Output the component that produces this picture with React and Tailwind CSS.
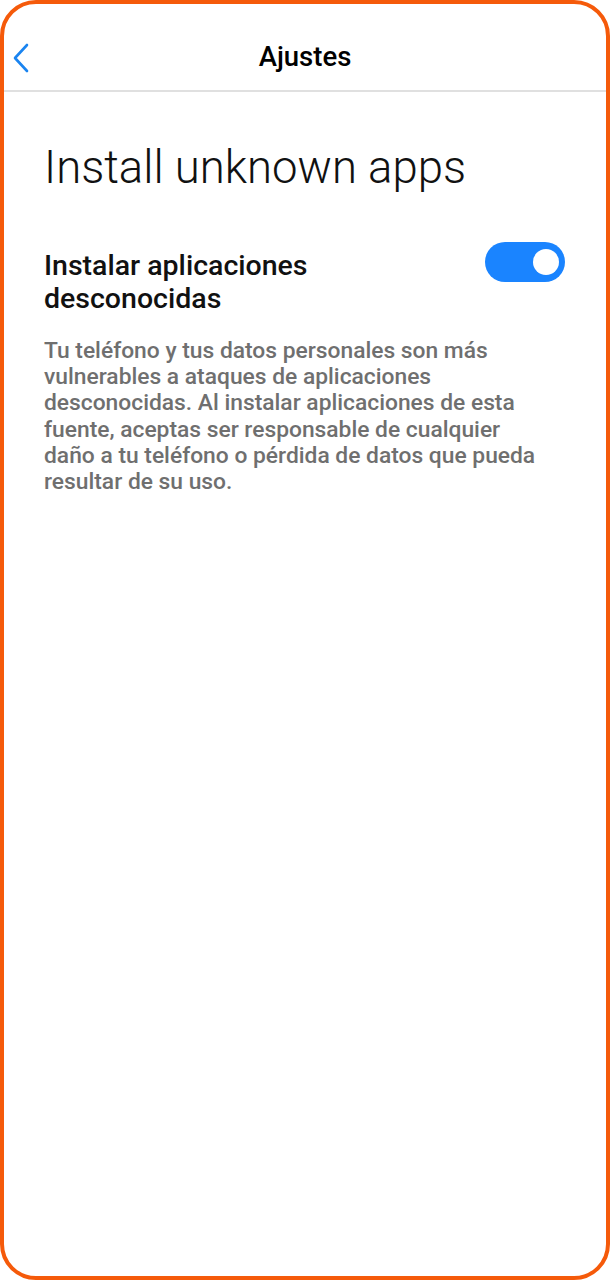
import React from 'react';

export default function App() {
  return (
    <div className="w-[610px] h-[1280px] bg-white" style={{ fontFamily: 'Roboto, "Noto Sans", sans-serif' }}>
      <div className="w-full h-full border-[4px] border-[#f55a0a] rounded-[36px] overflow-hidden flex flex-col">
        {/* Header */}
        <div className="relative h-[88px] flex items-center justify-center border-b-2 border-[#e0e0e0] shrink-0 pt-[19px]">
          <button className="absolute left-[6px] top-[38px] text-[#1a84f0]">
            <svg width="22" height="32" viewBox="0 0 22 32" fill="none">
              <path d="M17 3 L5 16 L17 29" stroke="currentColor" strokeWidth="2.6" strokeLinecap="round" strokeLinejoin="round" />
            </svg>
          </button>
          <h1 className="text-[27.5px] font-medium text-black leading-none">Ajustes</h1>
        </div>

        <div className="px-[40px]">
          <h2 className="mt-[48px] text-[45.5px] font-light text-[#111] leading-[56px]">Install unknown apps</h2>

          <div className="mt-[46px] flex items-start justify-between">
            <div className="pt-[7px] text-[28.5px] font-medium text-[#111] leading-[33px] w-[300px]">
              Instalar aplicaciones desconocidas
            </div>
            <div className="mr-[1px] w-[80px] h-[40px] rounded-full bg-[#1a84ff] flex items-center justify-end pr-[6px]">
              <div className="w-[26px] h-[26px] rounded-full bg-white" />
            </div>
          </div>

          <p className="mt-[23px] text-[22.8px] font-medium text-[#6f6f6f] leading-[26.2px] w-[505px]">
            Tu teléfono y tus datos personales son más vulnerables a ataques de aplicaciones desconocidas. Al instalar aplicaciones de esta fuente, aceptas ser responsable de cualquier daño a tu teléfono o pérdida de datos que pueda resultar de su uso.
          </p>
        </div>
      </div>
    </div>
  );
}
